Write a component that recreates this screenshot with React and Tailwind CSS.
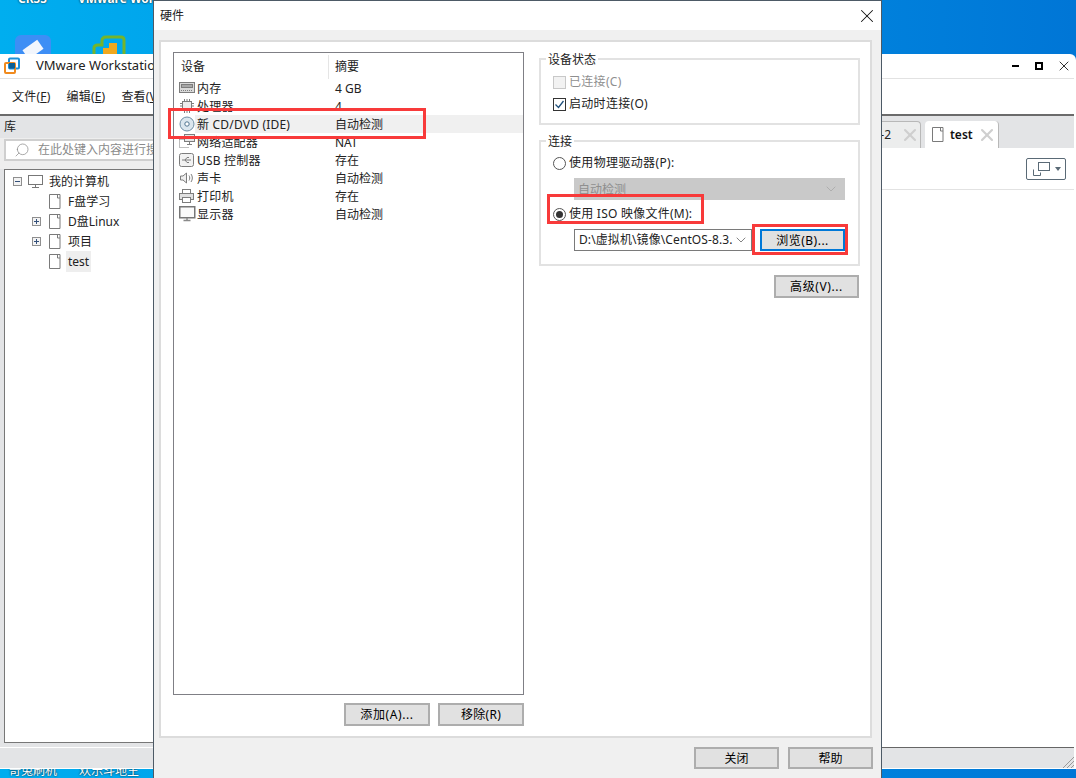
import { ChevronDown, Search, X } from "lucide-react";

const fontStack = { fontFamily: '"Noto Sans", "Noto Sans CJK SC", sans-serif' };

const devices = [
  { name: "内存", summary: "4 GB", icon: "memory" },
  { name: "处理器", summary: "4", icon: "cpu" },
  { name: "新 CD/DVD (IDE)", summary: "自动检测", icon: "cd", active: true },
  { name: "网络适配器", summary: "NAT", icon: "net" },
  { name: "USB 控制器", summary: "存在", icon: "usb" },
  { name: "声卡", summary: "自动检测", icon: "sound" },
  { name: "打印机", summary: "存在", icon: "printer" },
  { name: "显示器", summary: "自动检测", icon: "monitor" },
];

const DeviceIcon = ({ type }) => {
  const s = { fill: "none", stroke: "#7d7d7d", strokeWidth: 1 };
  return (
    <svg width="18" height="16" viewBox="0 0 18 16" className="shrink-0">
      {type === "memory" && (
        <g {...s}>
          <rect x=".5" y="2.5" width="15" height="10" fill="#d9d9d9" />
          <rect x="2.5" y="4.5" width="11" height="3" fill="#a8a8a8" />
          <path d="M2 10.500h12" strokeDasharray="1 1" />
        </g>
      )}
      {type === "cpu" && (
        <g {...s}>
          <rect x="3.5" y="3.5" width="9" height="9" fill="#ececec" />
          <path d="M5.500 1v2M8 1v2M10.500 1v2M5.500 13v2M8 13v2M10.500 13v2M1 5.500h2M1 8h2M1 10.500h2M13 5.500h2M13 8h2M13 10.500h2" />
        </g>
      )}
      {type === "cd" && (
        <g>
          <circle cx="8" cy="8" r="7" fill="#dbe6ee" stroke="#6f8ea5" />
          <circle cx="8" cy="8" r="2.200" fill="#fff" stroke="#4f7490" />
        </g>
      )}
      {type === "net" && (
        <g {...s}>
          <rect x="5.500" y=".5" width="10" height="7" fill="#e6e6e6" />
          <path d="M10.500 7.500v3M8 10.500h5" />
          <path d="M.5 5.500h5M.5 5.500v8h9" strokeDasharray="1 1" />
        </g>
      )}
      {type === "usb" && (
        <g {...s}>
          <rect x=".5" y="1.500" width="14" height="13" rx="2" fill="#f2f2f2" />
          <path d="M3 8h9M6 8l2-2.500h2M6 8l2 2.500h2" />
        </g>
      )}
      {type === "sound" && (
        <g {...s}>
          <path d="M1.500 6v4H4l3.500 3V3L4 6z" fill="#eee" />
          <path d="M10 5.500c1 1.500 1 3.500 0 5M12 4c1.800 2.400 1.800 5.600 0 8" />
        </g>
      )}
      {type === "printer" && (
        <g {...s}>
          <rect x="3.500" y="1.500" width="8" height="4" fill="#fff" />
          <rect x=".5" y="5.500" width="14" height="6" fill="#e0e0e0" />
          <rect x="3.500" y="9.500" width="8" height="5" fill="#fff" />
        </g>
      )}
      {type === "monitor" && (
        <g {...s}>
          <rect x=".75" y=".75" width="15" height="11" fill="#fafafa" stroke="#777" strokeWidth="1.500" />
          <path d="M4.500 14.500h7M8 12v2.500" stroke="#8a8a8a" strokeWidth="1.500" />
        </g>
      )}
    </svg>
  );
};

const PageIcon = ({ className = "" }) => (
  <svg width="12" height="15" viewBox="0 0 12 15" className={`shrink-0 ${className}`}>
    <path d="M.5.500h10.500v14H.5z" fill="#fff" stroke="#7a7a7a" />
    <path d="M8.500.500v3.500h2.500" fill="none" stroke="#7a7a7a" />
  </svg>
);

const Expander = ({ open }) => (
  <svg width="9" height="9" viewBox="0 0 9 9" className="shrink-0">
    <rect x=".5" y=".5" width="8" height="8" fill="#f3f3f3" stroke="#8f8f8f" />
    <path d={open ? "M2 4.500h5" : "M2 4.500h5M4.500 2v5"} stroke="#34507a" />
  </svg>
);

const TreeRow = ({ label, expander, highlight }) => (
  <div className="flex items-center h-5">
    <div className="w-[27px] shrink-0" />
    <div className="w-[9px] shrink-0 flex">{expander && <Expander />}</div>
    <PageIcon className="ml-[8px]" />
    <span className={`ml-[5px] px-[2px] leading-[21px] ${highlight ? "bg-[#eeeeee]" : ""}`}>{label}</span>
  </div>
);

const WinButton = ({ children, className = "" }) => (
  <button className={`flex items-center justify-center bg-[#e1e1e1] border-2 border-[#adadad] text-[12px] leading-[20px] pt-[1px] text-black ${className}`}>
    {children}
  </button>
);

const Radio = ({ checked }) => (
  <span className="w-[13px] h-[13px] shrink-0 rounded-full border border-[#555] bg-white flex items-center justify-center">
    {checked && <span className="w-[7px] h-[7px] rounded-full bg-[#333]" />}
  </span>
);

const Check = ({ checked, disabled }) => (
  <span className={`w-[13px] h-[13px] shrink-0 border flex items-center justify-center ${disabled ? "border-[#c8c8c8] bg-[#f2f2f2]" : "border-[#333] bg-white"}`}>
    {checked && (
      <svg width="11" height="11" viewBox="0 0 11 11">
        <path d="M1.500 5.500l3 3 5-6.500" fill="none" stroke="#1f4f7a" strokeWidth="1.300" />
      </svg>
    )}
  </span>
);

const RedBox = ({ className }) => (
  <div className={`absolute border-[3px] border-[#f83a3a] pointer-events-none ${className}`} />
);

const MenuItem = ({ label, hotkey }) => (
  <span className="tracking-[0.2px]">
    {label}(<span className="underline">{hotkey}</span>)
  </span>
);

function MainWindow() {
  return (
    <div className="absolute left-0 top-[54px] w-[1076px] h-[715px] pr-[2px] pb-[1px] flex flex-col bg-white rounded-tr-[6px] text-[12px] text-[#222]">
      <div className="h-[24px] flex items-center shrink-0">
        <svg width="16" height="18" viewBox="0 0 16 18" className="ml-[4px]">
          <rect x="5" y="1.500" width="10" height="10" rx="1" fill="none" stroke="#1d8fd8" strokeWidth="2" />
          <rect x="1" y="6" width="10" height="10" rx="1" fill="none" stroke="#f08a1d" strokeWidth="2" />
          <rect x="5" y="6" width="6" height="5.500" fill="#0c5f94" />
        </svg>
        <span className="ml-[16px] text-[13px]">VMware Workstation</span>
        <div className="ml-auto flex items-center gap-[13px] pr-[2px]">
          <span className="w-[7px] h-[2px] bg-black" />
          <span className="w-[8px] h-[8px] border-2 border-black ml-[3px]" />
          <X size={16} strokeWidth={1.300} color="#111" />
        </div>
      </div>
      <div className="h-[1px] bg-[#e2e2e2] shrink-0" />
      <div className="h-[35px] flex items-center gap-[16px] pl-[12px] shrink-0">
        <MenuItem label="文件" hotkey="F" />
        <MenuItem label="编辑" hotkey="E" />
        <MenuItem label="查看" hotkey="V" />
      </div>
      <div className="h-[2px] bg-[#6b6b6b] shrink-0" />
      <div className="flex flex-1 min-h-0">
        <div className="w-[300px] shrink-0 flex flex-col bg-[#e3e4e6]">
          <div className="h-[22px] pl-[4px] flex items-center shrink-0">库</div>
          <div className="h-[31px] bg-[#eeeeee] pl-[4px] pt-[1px] shrink-0">
            <div className="h-[22px] bg-white border-2 border-[#cfcfcf] flex items-center pl-[8px] text-[#8a8a8a]">
              <Search size={16} strokeWidth={1.100} className="-scale-x-100 shrink-0" />
              <span className="ml-[8px] whitespace-nowrap">在此处键入内容进行搜索</span>
            </div>
          </div>
          <div className="ml-[4px] h-[574px] bg-white border border-[#777] pt-[1px] shrink-0">
            <div className="flex items-center h-5">
              <span className="ml-[8px] flex"><Expander open /></span>
              <svg width="15" height="13" viewBox="0 0 15 13" className="ml-[6px] shrink-0">
                <rect x=".5" y=".5" width="14" height="9" fill="none" stroke="#777" />
                <path d="M4 12.500h7M7.500 10v2" stroke="#777" />
              </svg>
              <span className="ml-[6px] leading-[21px]">我的计算机</span>
            </div>
            <TreeRow label="F盘学习" />
            <TreeRow label="D盘Linux" expander />
            <TreeRow label="项目" expander />
            <TreeRow label="test" highlight />
          </div>
        </div>
        <div className="flex-1 min-w-0 flex flex-col">
          <div className="h-[32px] bg-[#e3e4e6] flex items-end justify-end shrink-0">
            <div className="h-[27px] w-[46px] bg-[#eceded] border-r border-t border-[#b8b8b8] rounded-tr-[4px] flex items-center justify-end gap-[9px]">
              <span>-2</span>
              <X size={20} strokeWidth={2.500} color="#cfcfcf" />
            </div>
            <div className="ml-[4px] mr-[75px] h-[27px] w-[74px] bg-white border-r border-[#b8b8b8] rounded-t-[4px] flex items-center pl-[7px]">
              <PageIcon />
              <span className="ml-[6px] font-semibold text-[#111]">test</span>
              <X size={20} strokeWidth={2.500} color="#cfcfcf" className="ml-[4px] shrink-0" />
            </div>
          </div>
          <div className="h-[42px] flex items-start justify-end border-b border-[#e2e2e2] pt-[10px] pr-[8px] shrink-0">
            <div className="w-[40px] h-[22px] border border-[#5a6a76] rounded-[2px] flex items-center pl-[6px] gap-[5px]">
              <svg width="17" height="14" viewBox="0 0 17 14">
                <rect x="5.500" y=".5" width="11" height="8" fill="#fff" stroke="#5a6a76" />
                <path d="M.5 7.500v6h7v-3" fill="none" stroke="#5a6a76" />
              </svg>
              <span className="w-0 h-0 border-x-[3.500px] border-x-transparent border-t-[4px] border-t-[#5a6a76]" />
            </div>
          </div>
          <div className="flex-1" />
        </div>
      </div>
      <div className="h-[1px] bg-[#666] ml-[500px] shrink-0" />
      <div className="h-[20px] bg-[#e3e4e6] flex justify-end items-end shrink-0">
        <svg width="12" height="12" viewBox="0 0 12 12">
          <path d="M1 12L12 1M5 12l7-7M9 12l3-3" stroke="#9a9a9a" />
        </svg>
      </div>
    </div>
  );
}

function HardwareDialog() {
  return (
    <div className="absolute left-[153px] top-0 w-[729px] h-[778px] bg-[#f0f0f0] border-x border-t border-[#4d5a66] flex flex-col text-[12px] text-[#222]">
      <div className="h-[29px] bg-white flex items-center justify-between pl-[6px] pr-[3px] shrink-0">
        <span>硬件</span>
        <X size={22} strokeWidth={1.100} color="#111" />
      </div>
      <div className="ml-[5px] mt-[10px] mr-[9px] h-[698px] bg-white border-2 border-[#dcdcdc] pl-[12px] pt-[10px] shrink-0 flex gap-[15px]">
        <div className="w-[351px] shrink-0 flex flex-col">
          <div className="h-[643px] border border-[#7f7f85] pt-[2px]">
            <div className="flex h-[24px] items-center">
              <span className="w-[155px] pl-[7px] h-full flex items-center border-r border-[#e5e5e5] leading-[26px]">设备</span>
              <span className="pl-[6px] leading-[26px]">摘要</span>
            </div>
            {devices.map((d) => (
              <div key={d.name} className="flex h-[18px] items-center">
                <div className="w-[155px] flex items-center h-full pl-[5px] shrink-0">
                  <DeviceIcon type={d.icon} />
                  <span className={`-ml-[2px] pl-[2px] h-full leading-[20px] tracking-[0.2px] flex-1 whitespace-nowrap ${d.active ? "bg-[#f0f0f0]" : ""}`}>{d.name}</span>
                </div>
                <span className={`pl-[6px] h-full leading-[20px] flex-1 ${d.active ? "bg-[#f0f0f0]" : ""}`}>{d.summary}</span>
              </div>
            ))}
          </div>
          <div className="flex justify-end gap-[8px] mt-[8px]">
            <WinButton className="w-[86px] h-[23px] tracking-[0.6px]">添加(A)...</WinButton>
            <WinButton className="w-[86px] h-[23px] tracking-[0.3px]">移除(R)</WinButton>
          </div>
        </div>
        <div className="w-[321px] shrink-0 flex flex-col -mt-[1px]">
          <fieldset className="border-2 border-[#e2e2e2] h-[74px] pl-[12px] pt-[4px]">
            <legend className="-ml-[7px] px-[2px] h-[16px] leading-[18px]">设备状态</legend>
            <label className="flex items-center gap-[3px] h-[22px] text-[#8f8f8f] tracking-[0.3px] leading-[24px]">
              <Check disabled />
              已连接(C)
            </label>
            <label className="flex items-center gap-[3px] h-[22px] tracking-[0.3px] leading-[24px]">
              <Check checked />
              启动时连接(O)
            </label>
          </fieldset>
          <fieldset className="mt-[8px] border-2 border-[#e2e2e2] h-[133px] pl-[12px] pr-[13px] pt-[5px]">
            <legend className="-ml-[7px] px-[2px] h-[16px] leading-[18px]">连接</legend>
            <label className="flex items-center gap-[3px] h-[18px] tracking-[0.35px] leading-[20px]">
              <Radio />
              使用物理驱动器(P):
            </label>
            <div className="ml-[21px] mt-[6px] h-[22px] bg-[#c9c9c9] flex items-center justify-between px-[4px] pr-[6px] text-[#8f8f8f] leading-[25px]">
              自动检测
              <ChevronDown size={16} strokeWidth={1} color="#a0a0a0" />
            </div>
            <label className="flex items-center gap-[3px] h-[18px] mt-[5px] tracking-[0.25px] leading-[20px]">
              <Radio checked />
              使用 ISO 映像文件(M):
            </label>
            <div className="ml-[21px] mt-[6px] flex gap-[8px]">
              <div className="w-[178px] h-[22px] border border-[#7a7a7a] bg-white flex items-center justify-between pl-[4px] pr-[2px] whitespace-nowrap overflow-hidden leading-[22px]">
                <span className="overflow-hidden tracking-[0.1px]">D:\虚拟机\镜像\CentOS-8.3.</span>
                <ChevronDown size={16} strokeWidth={1} color="#444" className="shrink-0" />
              </div>
              <button className="w-[85px] h-[22px] bg-[#e1e1e1] border-2 border-[#0078d7] flex items-center justify-center text-black tracking-[0.5px] leading-[20px] pt-[1px]">
                浏览(B)...
              </button>
            </div>
          </fieldset>
          <div className="flex justify-end mt-[9px] mr-[1px]">
            <WinButton className="w-[85px] h-[23px] tracking-[0.6px]">高级(V)...</WinButton>
          </div>
        </div>
      </div>
      <div className="flex justify-end gap-[9px] mr-[8px] mt-[9px]">
        <WinButton className="w-[85px] h-[22px]">关闭</WinButton>
        <WinButton className="w-[85px] h-[22px]">帮助</WinButton>
      </div>
    </div>
  );
}

export default function App() {
  return (
    <div
      className="relative w-[1076px] h-[778px] overflow-hidden bg-gradient-to-r from-[#00aeef] via-[#0092e6] to-[#0076d6]"
      style={fontStack}
    >
      {/* desktop icons peeking out above the window */}
      <div className="absolute left-[15px] top-[35px] w-[36px] h-[36px] rounded-[6px] bg-[#3d8ef5] flex justify-center pt-[9px]">
        <span className="w-[18px] h-[11px] -rotate-[35deg] bg-[#f2f6fd]" />
      </div>
      <svg width="36" height="24" viewBox="0 0 36 24" className="absolute left-[91px] top-[34px]">
        <path d="M3 20V14Q3 11 7 11H11V7Q11 3 15 3H30Q33 3 33 6V20" fill="none" stroke="#74b42c" strokeWidth="3" />
        <path d="M26 9H18V14H12V20H26Z" fill="#f0a81e" />
      </svg>
      <div className="absolute left-[18px] -top-[10px] text-[12px] font-bold text-white whitespace-nowrap [text-shadow:0_0_2px_#000]">CRSS</div>
      <div className="absolute left-[78px] -top-[10px] text-[12px] font-bold text-white whitespace-nowrap [text-shadow:0_0_2px_#000]">VMware Work</div>
      <div className="absolute left-[9px] top-[762px] text-[12px] leading-[18px] text-white flex gap-[22px] whitespace-nowrap [text-shadow:0_0_2px_#000]">
        <span>奇兔刷机</span>
        <span>欢乐斗地主</span>
      </div>

      <MainWindow />
      <HardwareDialog />

      <RedBox className="left-[168px] top-[108px] w-[258px] h-[31px]" />
      <RedBox className="left-[547px] top-[194px] w-[157px] h-[30px]" />
      <RedBox className="left-[752px] top-[224px] w-[96px] h-[31px]" />
    </div>
  );
}
